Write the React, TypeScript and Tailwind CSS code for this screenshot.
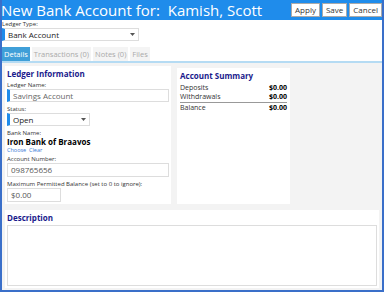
import React from "react"

const font = { fontFamily: '"Open Sans", "Noto Sans", Arial, sans-serif' }

function Label({ children }: { children: React.ReactNode }) {
  return <div className="text-[6px] leading-[8px] text-[#333]">{children}</div>
}

function Caret() {
  return (
    <svg width="5" height="3" viewBox="0 0 5 3" className="shrink-0">
      <path d="M0 0h5L2.5 3z" fill="#555" />
    </svg>
  )
}

function SummaryRow({ label, value, line }: { label: string; value: string; line?: boolean }) {
  return (
    <div className={"flex justify-between h-[10px] items-center" + (line ? " border-b border-[#999]" : "")}>
      <span className="text-[#333]">{label}</span>
      <span className="font-bold text-black">{value}</span>
    </div>
  )
}

export default function App() {
  return (
    <div className="w-[384px] h-[292px] bg-white border-2 border-t-0 border-[#3a6fc9] flex flex-col overflow-hidden" style={font}>
      {/* title bar */}
      <div className="h-[20px] bg-[#1f8ceb] flex items-center justify-between pl-[1px] pr-[2px] -mx-[2px] shrink-0">
        <div className="text-white text-[15px] leading-[20px] whitespace-pre">New Bank Account for:  Kamish, Scott</div>
        <div className="flex gap-[2px]">
          <button className="h-[14px] px-[3px] bg-white border border-[#aaa] text-[8px] leading-[12px] text-[#333]">Apply</button>
          <button className="h-[14px] px-[3px] bg-white border border-[#aaa] text-[8px] leading-[12px] text-[#333]">Save</button>
          <button className="h-[14px] px-[3px] bg-white border border-[#aaa] text-[8px] leading-[12px] text-[#333]">Cancel</button>
        </div>
      </div>

      {/* ledger type */}
      <div className="shrink-0">
        <Label>Ledger Type:</Label>
        <div className="w-[137px] h-[13px] flex items-center border border-[#ddd] border-l-[3px] border-l-[#1f8ceb] pl-[3px] pr-[3px] justify-between">
          <span className="text-[8px] text-[#222]">Bank Account</span>
          <Caret />
        </div>
      </div>

      {/* tabs */}
      <div className="mt-[6px] flex gap-[2px] border-b-2 border-[#b5dbf3] text-[7.5px] leading-[14px] shrink-0">
        <div className="bg-[#3f9fd8] text-white px-[2px]">Details</div>
        <div className="bg-[#f4f4f4] text-[#aaa] px-[2px]">Transactions (0)</div>
        <div className="bg-[#f4f4f4] text-[#aaa] px-[2px]">Notes (0)</div>
        <div className="bg-[#f4f4f4] text-[#aaa] px-[2px]">Files</div>
      </div>

      {/* content */}
      <div className="flex-1 bg-[#f3f3f3] px-[3px] pt-[3px] pb-[2px] flex flex-col gap-[6px]">
        <div className="flex gap-[6px] items-start">
          <div className="w-[166px] h-[138px] bg-white px-[2px] pt-[3px]">
            <div className="text-[8px] font-bold text-[#1a1a8c] leading-[10px]">Ledger Information</div>
            <div className="mt-[2px]">
              <Label>Ledger Name:</Label>
              <div className="h-[13px] flex items-center border border-[#ddd] border-l-[3px] border-l-[#1f8ceb] pl-[3px] text-[8px] text-[#666]">Savings Account</div>
            </div>
            <div className="mt-[3px]">
              <Label>Status:</Label>
              <div className="w-[83px] h-[13px] flex items-center justify-between border border-[#ddd] border-l-[3px] border-l-[#1f8ceb] pl-[3px] pr-[3px] text-[8px] text-[#222]">
                <span>Open</span>
                <Caret />
              </div>
            </div>
            <div className="mt-[3px]">
              <Label>Bank Name:</Label>
              <div className="text-[8px] leading-[9px] font-bold text-black">Iron Bank of Braavos</div>
              <div className="text-[5.5px] leading-[8px] text-[#3a7bd5]">Choose&nbsp;&nbsp;Clear</div>
            </div>
            <div className="mt-[1px]">
              <Label>Account Number:</Label>
              <div className="h-[14px] flex items-center border border-[#ddd] pl-[3px] text-[8px] text-[#555]">098765656</div>
            </div>
            <div className="mt-[3px]">
              <Label>Maximum Permitted Balance (set to 0 to ignore):</Label>
              <div className="w-[54px] h-[14px] flex items-center border border-[#ddd] pl-[3px] text-[8px] text-[#555]">$0.00</div>
            </div>
          </div>
          <div className="w-[113px] h-[136px] mt-[2px] bg-white px-[3px] pt-[3px] text-[7px]">
            <div className="text-[8px] font-bold text-[#1a1a8c] leading-[10px] mb-[2px]">Account Summary</div>
            <SummaryRow label="Deposits" value="$0.00" />
            <SummaryRow label="Withdrawals" value="$0.00" line />
            <SummaryRow label="Balance" value="$0.00" />
          </div>
        </div>
        <div className="flex-1 bg-white px-[2px] pt-[3px] pb-[2px] flex flex-col">
          <div className="text-[8px] font-bold text-[#1a1a8c] leading-[10px]">Description</div>
          <div className="flex-1 mt-[2px] border border-[#ddd]" />
        </div>
      </div>
    </div>
  )
}
